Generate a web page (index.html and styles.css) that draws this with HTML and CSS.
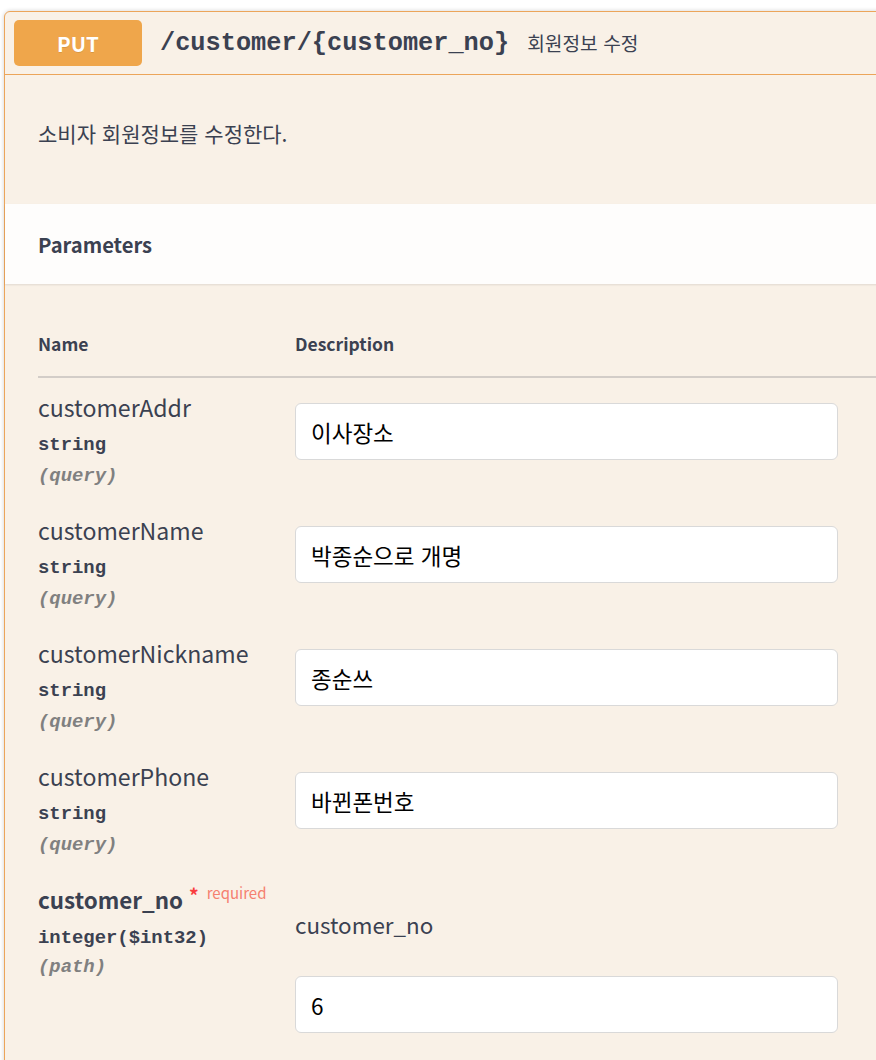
FILE: index.html
```html
<!DOCTYPE html>
<html lang="ko">
<head>
<meta charset="utf-8">
<title>PUT /customer/{customer_no}</title>
<link rel="stylesheet" href="styles.css">
</head>
<body>
<div class="page">
  <div class="opblock">
    <div class="summary">
      <span class="method">PUT</span>
      <span class="path">/customer/{customer_no}</span>
      <span class="summary-desc">회원정보 수정</span>
    </div>
    <div class="desc-wrap">
      <p>소비자 회원정보를 수정한다.</p>
    </div>
    <div class="section-header">
      <h4>Parameters</h4>
    </div>
    <div class="table-container">
      <div class="param-table">
        <div class="th">Name</div>
        <div class="th">Description</div>

        <div class="cell name-cell">
          <div class="pname">customerAddr</div>
          <div class="ptype">string</div>
          <div class="pin">(query)</div>
        </div>
        <div class="cell desc-cell">
          <div class="field">이사장소</div>
        </div>

        <div class="cell name-cell">
          <div class="pname">customerName</div>
          <div class="ptype">string</div>
          <div class="pin">(query)</div>
        </div>
        <div class="cell desc-cell">
          <div class="field">박종순으로 개명</div>
        </div>

        <div class="cell name-cell">
          <div class="pname">customerNickname</div>
          <div class="ptype">string</div>
          <div class="pin">(query)</div>
        </div>
        <div class="cell desc-cell">
          <div class="field">종순쓰</div>
        </div>

        <div class="cell name-cell">
          <div class="pname">customerPhone</div>
          <div class="ptype">string</div>
          <div class="pin">(query)</div>
        </div>
        <div class="cell desc-cell">
          <div class="field">바뀐폰번호</div>
        </div>

        <div class="cell name-cell">
          <div class="pname required">customer_no<span class="star">*</span><span class="req">required</span></div>
          <div class="ptype ptype-req">integer($int32)</div>
          <div class="pin pin-req">(path)</div>
        </div>
        <div class="cell desc-cell">
          <p class="pdesc">customer_no</p>
          <div class="field field-gap">6</div>
        </div>
      </div>
    </div>
  </div>
</div>
</body>
</html>
```

FILE: styles.css
```css
html, body {
  margin: 0;
  padding: 0;
  background: #ffffff;
  overflow: hidden;
}

body {
  font-family: "Noto Sans CJK KR", "Noto Sans", sans-serif;
  color: #3b4151;
}

.page {
  padding: 11px 0 0 4px;
}

.opblock {
  margin-right: -60px;
  border: 1.5px solid #eca55a;
  border-radius: 6px;
  background: #f9f1e7;
  box-shadow: 0 0 4px rgba(0, 0, 0, 0.19);
  min-height: 1100px;
}

.summary {
  display: flex;
  align-items: center;
  padding: 8px 9px;
  border-bottom: 1.5px solid #eca55a;
}

.method {
  width: 128px;
  height: 46px;
  display: flex;
  align-items: center;
  justify-content: center;
  background: #efa64b;
  border-radius: 5px;
  color: #ffffff;
  font-weight: 700;
  font-size: 20.5px;
  text-shadow: 0 1px 0 rgba(0, 0, 0, 0.1);
}

.path {
  margin-left: 18px;
  font-family: "Liberation Mono", "Courier New", monospace;
  font-weight: 700;
  font-size: 25.3px;
  color: #3b4151;
}

.summary-desc {
  margin-left: 18px;
  font-size: 19.2px;
  color: #3b4151;
}

.desc-wrap {
  padding: 0 33px;
  height: 129px;
}

.desc-wrap p {
  margin: 0;
  padding-top: 44px;
  font-size: 21px;
  line-height: 28px;
}

.section-header {
  height: 80px;
  display: flex;
  align-items: center;
  padding: 0 33px;
  background: rgba(255, 255, 255, 0.85);
  box-shadow: 0 1px 2px rgba(0, 0, 0, 0.1);
}

.section-header h4 {
  margin: 0;
  font-size: 20.2px;
  font-weight: 700;
  color: #3b4151;
}

.table-container {
  padding: 32px 0 0 33px;
}

.param-table {
  display: grid;
  grid-template-columns: 257px 1fr;
}

.th {
  padding: 16px 0 20px;
  font-size: 17.5px;
  font-weight: 700;
  line-height: 24px;
  border-bottom: 2px solid rgba(59, 65, 81, 0.2);
}

.cell {
  padding: 15px 0;
}

.pname {
  font-size: 23.1px;
  line-height: 28px;
  color: #3b4151;
}

.pname.required {
  font-size: 22.4px;
  font-weight: 700;
}

.star {
  color: #f93e3e;
  font-size: 19px;
  line-height: 0;
  position: relative;
  top: -6px;
  margin-left: 6px;
}

.req {
  color: #f5806f;
  font-size: 15px;
  font-weight: 400;
  line-height: 0;
  position: relative;
  top: -10px;
  margin-left: 8px;
}

.ptype {
  margin-top: 14px;
  font-family: "Liberation Mono", "Courier New", monospace;
  font-weight: 700;
  font-size: 18.9px;
  line-height: 20px;
  color: #3b4151;
}

.ptype-req {
  margin-top: 15px;
}

.pin {
  margin-top: 11px;
  font-family: "Liberation Mono", "Courier New", monospace;
  font-weight: 700;
  font-style: italic;
  font-size: 18.9px;
  line-height: 20px;
  color: #808080;
}

.pin-req {
  margin-top: 9px;
}

.field {
  margin-top: 10px;
  width: 543px;
  height: 57px;
  box-sizing: border-box;
  display: flex;
  align-items: center;
  padding: 0 15px;
  background: #ffffff;
  border: 1px solid #d9d9d9;
  border-radius: 6px;
  font-size: 22.5px;
  color: #000000;
}

.pdesc {
  margin: 26px 0 0;
  font-size: 22.4px;
  line-height: 26px;
  color: #3b4151;
}

.field-gap {
  margin-top: 39px;
}
```
